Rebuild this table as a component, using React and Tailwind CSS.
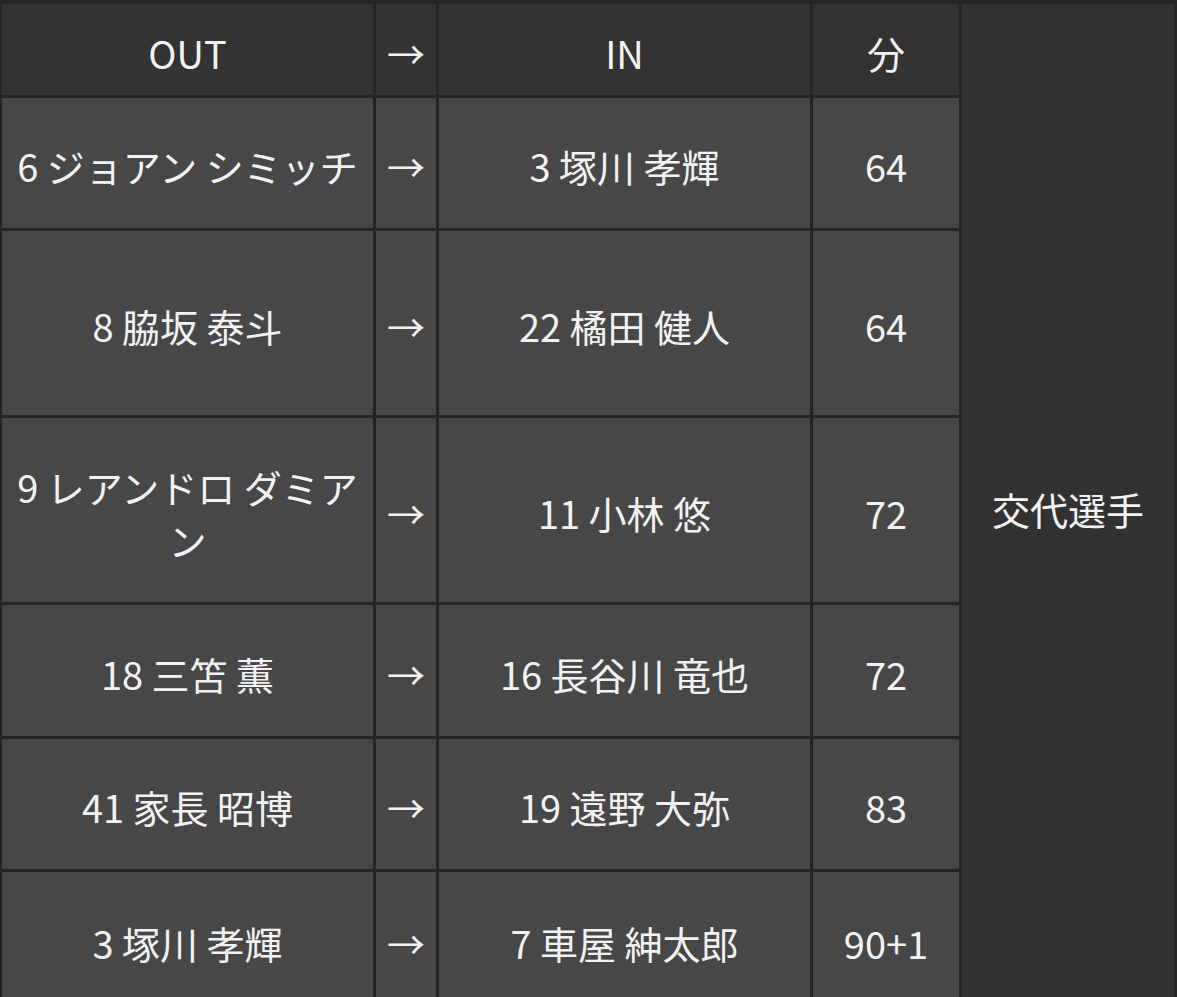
import React from 'react';

const subs = [
  { out: '6 ジョアン シミッチ', in: '3 塚川 孝輝', min: '64', h: 'h-[130px]' },
  { out: '8 脇坂 泰斗', in: '22 橘田 健人', min: '64', h: 'h-[184px]' },
  { out: '9 レアンドロ ダミアン', in: '11 小林 悠', min: '72', h: 'h-[184px]' },
  { out: '18 三笘 薫', in: '16 長谷川 竜也', min: '72', h: 'h-[131px]' },
  { out: '41 家長 昭博', in: '19 遠野 大弥', min: '83', h: 'h-[130px]' },
  { out: '3 塚川 孝輝', in: '7 車屋 紳太郎', min: '90+1', h: 'h-[136px]' },
];

export default function App() {
  return (
    <div
      className="bg-[#252525] pt-[4px] pl-[2px] pr-[3px] pb-[3px] text-[38px] leading-[1.4] text-[#f2f2f2]"
      style={{ fontFamily: '"Noto Sans CJK JP", "Noto Sans", sans-serif' }}
    >
      <div className="grid grid-cols-[371px_60px_371px_146px_212px] gap-[3px]">
        {/* header */}
        <div className="h-[91px] bg-[#333333] flex items-center justify-center pt-[6px]">OUT</div>
        <div className="bg-[#333333] flex items-center justify-center pt-[6px]">→</div>
        <div className="bg-[#333333] flex items-center justify-center pt-[6px]">IN</div>
        <div className="bg-[#333333] flex items-center justify-center pt-[6px]">分</div>
        <div className="row-span-7 bg-[#323232] flex items-center justify-center pt-[6px]">交代選手</div>

        {subs.map((s, i) => (
          <React.Fragment key={i}>
            <div className={`${s.h} bg-[#474747] flex items-center justify-center text-center px-[8px] pt-[6px]`}>
              {s.out}
            </div>
            <div className="bg-[#474747] flex items-center justify-center pt-[6px]">→</div>
            <div className="bg-[#474747] flex items-center justify-center text-center px-[8px] pt-[6px]">{s.in}</div>
            <div className="bg-[#474747] flex items-center justify-center pt-[6px]">{s.min}</div>
          </React.Fragment>
        ))}
      </div>
    </div>
  );
}
